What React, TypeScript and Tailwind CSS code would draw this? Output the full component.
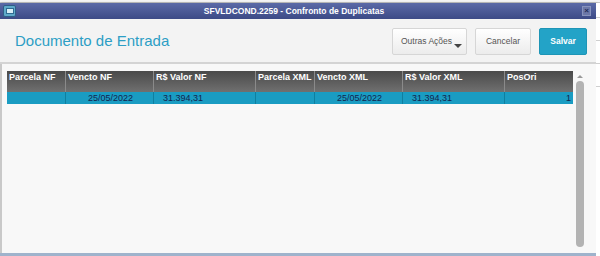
import React from "react";

const cols = [
  { label: "Parcela NF", w: 59 },
  { label: "Vencto NF", w: 88 },
  { label: "R$ Valor NF", w: 102 },
  { label: "Parcela XML", w: 59 },
  { label: "Vencto XML", w: 88 },
  { label: "R$ Valor XML", w: 102 },
  { label: "PosOri", w: 68 },
];

export default function App() {
  return (
    <div className="w-[600px] h-[256px] bg-white flex flex-col overflow-hidden font-['Liberation_Sans',Arial,sans-serif]">
      <div className="h-[3px] bg-[#f4f4f4] border-b border-[#c8c8c8]" />
      <div className="flex flex-1 min-h-0">
        <div className="w-[596px] flex flex-col border-b-[3px] border-[#9fb3cc] shadow-[1px_0_2px_rgba(0,0,0,0.3)]">
          {/* title bar */}
          <div className="h-[16px] flex items-center relative bg-gradient-to-b from-[#5b6aa7] to-[#3c4a86]">
            <div className="ml-[3px] w-[13px] h-[12px] rounded-[2px] bg-[#5fa9c9] border border-[#2e5e86] flex items-center justify-center">
              <div className="w-[8px] h-[6px] bg-[#d9eef7] border border-[#2f6c93]" />
            </div>
            <div className="flex-1 text-center text-white text-[8.5px] font-bold leading-none pr-[10px]">
              SFVLDCOND.2259 - Confronto de Duplicatas
            </div>
            <div className="mr-[5px] w-[9px] h-[10px] bg-[#6c78a8] border border-[#8893bd] flex items-center justify-center text-[#1f2a55] text-[8px] font-bold leading-none">
              ×
            </div>
          </div>
          {/* header */}
          <div className="h-[45px] flex items-center bg-[#f3f3f3] border-b-2 border-[#d4d4d4]">
            <div className="ml-[15px] text-[15px] text-[#2c9ec5] flex-1 pt-[1px]">Documento de Entrada</div>
            <div className="flex gap-[8px] mr-[9px] mt-[1px]">
              <div className="w-[75px] h-[27px] relative rounded-[2px] border border-[#d6d6d6] bg-gradient-to-b from-white to-[#ececec] flex items-center pl-[8px] text-[8.5px] text-[#555]">
                Outras Ações
                <div className="absolute right-[4px] bottom-[6px] w-0 h-0 border-l-[4px] border-r-[4px] border-t-[4px] border-l-transparent border-r-transparent border-t-[#444]" />
              </div>
              <div className="w-[56px] h-[27px] rounded-[2px] border border-[#d6d6d6] bg-gradient-to-b from-white to-[#ececec] flex items-center justify-center text-[8.5px] text-[#555]">
                Cancelar
              </div>
              <div className="w-[48px] h-[27px] rounded-[2px] border border-[#1e95b6] bg-[#23a3c7] flex items-center justify-center text-[8.5px] font-bold text-white">
                Salvar
              </div>
            </div>
          </div>
          {/* content */}
          <div className="flex-1 flex bg-[#f8f8f8] border-l-2 border-[#c9c9c9] pl-[5px] pt-[7px]">
            <div className="w-[566px] flex flex-col">
              <div className="flex h-[21px] bg-gradient-to-b from-[#4a4a4a] to-[#707070]">
                {cols.map((c, i) => (
                  <div
                    key={c.label}
                    style={{ width: c.w }}
                    className={`text-white text-[9px] font-bold pl-[2px] pt-[2px] leading-none ${i < cols.length - 1 ? "border-r border-[#8a8a8a]" : ""}`}
                  >
                    {c.label}
                  </div>
                ))}
              </div>
              <div className="flex h-[12px] bg-[#1a9cc2] text-[9px] text-[#13244f] leading-none items-center">
                <div style={{ width: 59 }} className="h-full border-r border-[#0f7fa0]" />
                <div style={{ width: 88 }} className="h-full border-r border-[#0f7fa0] flex items-center justify-center pl-[2px]">25/05/2022</div>
                <div style={{ width: 102 }} className="h-full border-r border-[#0f7fa0] flex items-center pl-[9px]">31.394,31</div>
                <div style={{ width: 59 }} className="h-full border-r border-[#0f7fa0]" />
                <div style={{ width: 88 }} className="h-full border-r border-[#0f7fa0] flex items-center justify-center pl-[2px]">25/05/2022</div>
                <div style={{ width: 102 }} className="h-full border-r border-[#0f7fa0] flex items-center pl-[9px]">31.394,31</div>
                <div style={{ width: 68 }} className="h-full flex items-center justify-end pr-[2px]">1</div>
              </div>
            </div>
            <div className="ml-[2px] w-[9px] flex flex-col items-center">
              <div className="h-[10px] flex items-center justify-center">
                <div className="w-0 h-0 border-l-[3px] border-r-[3px] border-b-[3px] border-l-transparent border-r-transparent border-b-[#9a9a9a]" />
              </div>
              <div className="flex-1 w-[8px] rounded-[4px] bg-[#b3b3b3] mb-[6px]" />
            </div>
          </div>
        </div>
        <div className="flex-1 bg-white flex flex-col gap-[22px] pt-[14px]">
          <div className="h-px bg-[#cfcfcf]" />
          <div className="h-px bg-[#cfcfcf]" />
          <div className="h-px bg-[#cfcfcf]" />
          <div className="h-px bg-[#cfcfcf]" />
        </div>
      </div>
    </div>
  );
}
